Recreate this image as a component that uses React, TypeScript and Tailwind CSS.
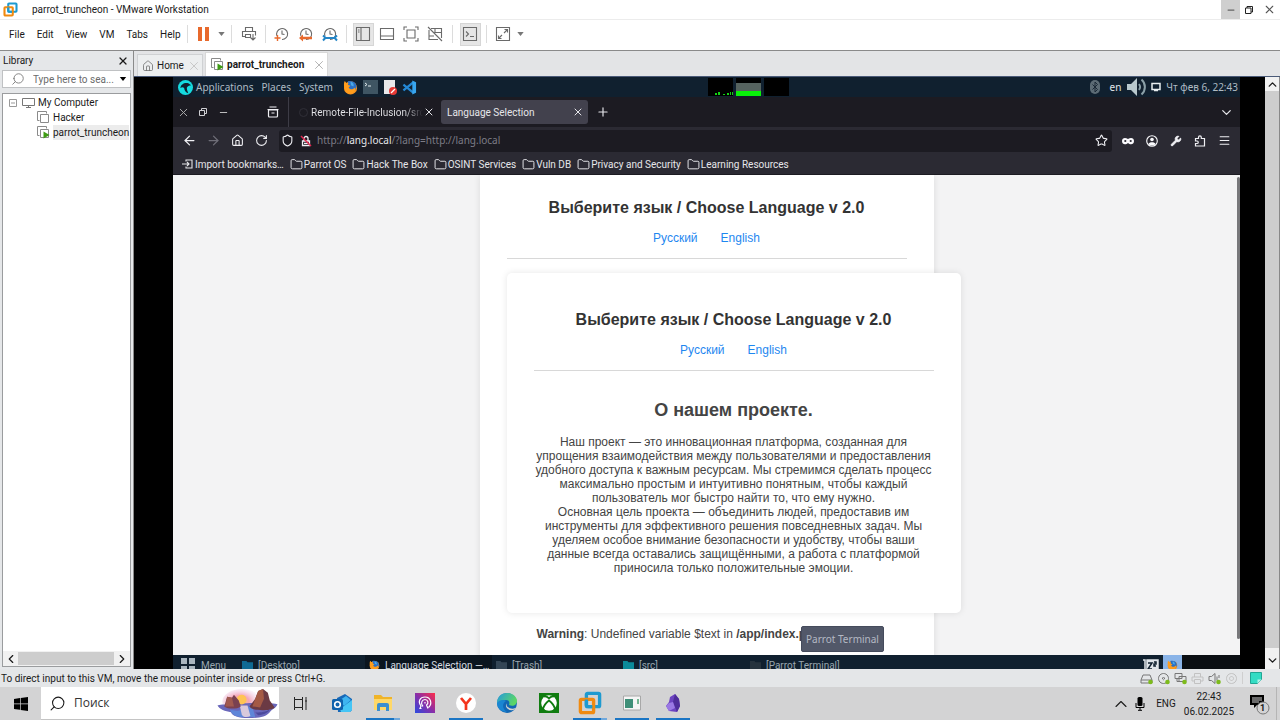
import type { ReactNode } from "react";
import {
  ArrowLeft,
  ArrowRight,
  ChevronDown,
  ChevronLeft,
  ChevronRight,
  ChevronUp,
  Folder,
  House,
  Menu,
  Minus,
  Plus,
  RotateCw,
  Search,
  Shield,
  Star,
  Wrench,
  X,
} from "lucide-react";

function VmwareLogo({ className }: { className: string }) {
  return (
    <svg viewBox="0 0 20 20" className={className} fill="none" strokeWidth="2.8" aria-hidden="true">
      <rect x="7" y="2" width="11" height="11" rx="1" stroke="#1e9ad0" />
      <rect x="2" y="7" width="11" height="11" rx="1" stroke="#f08a10" />
      <path d="M7 7v4.500a1.500 1.500 0 0 0 1.500 1.500H12" stroke="#1e9ad0" />
    </svg>
  );
}

function FirefoxLogo({ className }: { className: string }) {
  return (
    <svg viewBox="0 0 16 16" className={className} aria-hidden="true">
      <circle cx="8" cy="8.400" r="7" fill="#f7931e" />
      <path d="M5 1.600C7 .8 12 .8 14 5c1 3-.5 6-3 6.500C8 12 5 10 5.500 7z" fill="#2a6fc4" />
      <path d="M1 5C1 2 2 1 2 1l1.500 2.200L6 3.500 5 5l3 1-2 2c1 2 4 3 7 0 1 4-3 7-6 6.500C3 14 1 10 1 5z" fill="#ff9d1c" />
      <path d="M8 2c3 0 4 3 3 5L8.500 5.500z" fill="#49a9e8" />
    </svg>
  );
}

function MachineIcon({ running = false }: { running?: boolean }) {
  return (
    <svg viewBox="0 0 13 13" className="size-[13px] shrink-0" fill="none" stroke="#8a8a8a" aria-hidden="true">
      <path d="M2.500 9.500h-2v-9h9v2" />
      <path d="M3.500 3.500h8v8h-8z" fill="#fff" />
      {running && <path d="M6.500 5.500v7l6-3.500z" fill="#3f9c14" stroke="none" />}
    </svg>
  );
}

function ToolIcon({ children }: { children: ReactNode }) {
  return (
    <svg viewBox="0 0 16 16" className="size-4" fill="none" stroke="#6a6a6a" strokeWidth="1.100" aria-hidden="true">
      {children}
    </svg>
  );
}

function Tool({ label, active = false, children }: { label: string; active?: boolean; children: ReactNode }) {
  return (
    <button type="button" aria-label={label} className="flex w-6 shrink-0 justify-center">
      <span
        className={
          active
            ? "flex h-[23px] w-[21px] items-center justify-center border border-[#d6d6d6] bg-[#e6e6e6]"
            : "flex h-[23px] w-[21px] items-center justify-center"
        }
      >
        {children}
      </span>
    </button>
  );
}

function Separator() {
  return <span className="mx-1 h-[18px] w-px shrink-0 bg-[#dcdcdc]" />;
}

function WideSeparator() {
  return <span className="mx-[5px] h-[18px] w-px shrink-0 bg-[#dcdcdc]" />;
}

function Caret({ label }: { label: string }) {
  return (
    <button type="button" aria-label={label} className="flex w-[10px] justify-center">
      <svg viewBox="0 0 8 5" className="h-1 w-[7px]" aria-hidden="true">
        <path d="M0 0h8L4 5z" fill="#777" />
      </svg>
    </button>
  );
}

function ClockFace() {
  return (
    <>
      <path d="M3 10A5.500 5.500 0 1 1 8 13.500" />
      <path d="M8 4.500V8l2.500.5" />
    </>
  );
}

function TitleBar() {
  return (
    <header className="flex h-5 shrink-0 items-center border-b border-[#ececec] bg-white pl-[3px] text-[10px]">
      <VmwareLogo className="size-[15px]" />
      <h1 className="ml-[14px] flex-1 font-normal">parrot_truncheon - VMware Workstation</h1>
      <div className="flex h-full">
        <button type="button" aria-label="Minimize" className="flex w-[19px] items-center justify-center bg-[#cfcfcf]">
          <Minus className="size-[10px] text-[#666]" strokeWidth={3} />
        </button>
        <button type="button" aria-label="Restore" className="flex w-[18px] items-center justify-center">
          <svg viewBox="0 0 10 10" className="size-[10px]" fill="none" stroke="#222" aria-hidden="true">
            <path d="M1.500 3h5.500v5.500H1.500zM3 3V1.500h5.500V7H7" />
          </svg>
        </button>
        <button type="button" aria-label="Close" className="flex w-[22px] items-center justify-center">
          <X className="size-[13px] text-[#555]" strokeWidth={2} />
        </button>
      </div>
    </header>
  );
}

function MenuBar() {
  return (
    <div className="flex h-[31px] shrink-0 items-center border-b border-[#8a8a8a] bg-white pb-[2px] text-[10px]">
      <nav className="flex w-[183px] shrink-0 gap-3 pl-[9px]">
        {["File", "Edit", "View", "VM", "Tabs", "Help"].map((item) => (
          <button key={item} type="button">
            {item}
          </button>
        ))}
      </nav>
      <Separator />
      <Tool label="Suspend">
        <svg viewBox="0 0 12 14" className="h-[14px] w-3" fill="#e8692c" aria-hidden="true">
          <path d="M0 0h4v14H0zM7 0h4v14H7z" />
        </svg>
      </Tool>
      <Caret label="Power options" />
      <WideSeparator />
      <Tool label="Send Ctrl+Alt+Del">
        <ToolIcon>
          <path d="M4.500 5V1.500h7V5M4 10.500H1.500V5.500h13v4M4.500 8.500h5v3h-5zM12 8v6M9.500 11.500 12 14l2.500-2.500" />
        </ToolIcon>
      </Tool>
      <Separator />
      <Tool label="Take snapshot">
        <ToolIcon>
          <ClockFace />
          <path d="M3.500 9v6M.5 12h6" stroke="#e8692c" strokeWidth="1.400" />
        </ToolIcon>
      </Tool>
      <Tool label="Revert snapshot">
        <ToolIcon>
          <ClockFace />
          <path d="M1 12l4-3.500v2.300h9v2.400H5v2.300z" fill="#e8692c" stroke="none" />
        </ToolIcon>
      </Tool>
      <Tool label="Manage snapshots">
        <ToolIcon>
          <ClockFace />
          <path d="M1 9.500l2.500 2.300L1 14.500M4 12h8M15 9.500l-2.500 2.300L15 14.500" stroke="#2385c6" strokeWidth="2" />
        </ToolIcon>
      </Tool>
      <Separator />
      <Tool label="Show library" active>
        <ToolIcon>
          <path d="M1.500 1.500h13v13h-13zM6 1.500v13M3 4h1.500M3 6h1.500" />
        </ToolIcon>
      </Tool>
      <Tool label="Show thumbnails">
        <ToolIcon>
          <path d="M1.500 2.500h13v11h-13zM1.500 10h13" />
        </ToolIcon>
      </Tool>
      <Tool label="Full screen">
        <ToolIcon>
          <path d="M1 4V1h3M12 1h3v3M15 12v3h-3M4 15H1v-3M4 4h8v8H4z" />
        </ToolIcon>
      </Tool>
      <Tool label="Unity">
        <ToolIcon>
          <path d="M1 1l14 14M4 2.500h10.500V12M2 4v9.500h9M8 2.500v4h6.500M2 10h5" />
        </ToolIcon>
      </Tool>
      <WideSeparator />
      <Tool label="Console view" active>
        <ToolIcon>
          <path d="M1.500 1.500h13v13h-13zM4 5.500 6.500 8 4 10.500M8 10.500h4" />
        </ToolIcon>
      </Tool>
      <Separator />
      <Tool label="Stretch guest">
        <ToolIcon>
          <path d="M1.500 1.500h13v13h-13zM9 7l3.500-3.500M9.500 3.500h3v3M7 9l-3.500 3.500M3.500 9.500v3h3" />
        </ToolIcon>
      </Tool>
      <Caret label="Stretch options" />
    </div>
  );
}

function Library() {
  return (
    <aside className="flex w-[134px] shrink-0 flex-col border-r border-[#8a8a8a] bg-[#e5e7e9] pr-[2px] pb-[2px] pl-[2px] text-[10px]">
      <div className="flex h-[19px] items-center justify-between pr-[2px] pl-px">
        <h2 className="font-normal">Library</h2>
        <button type="button" aria-label="Close library">
          <X className="size-3" strokeWidth={2.500} />
        </button>
      </div>
      <div className="flex h-[18px] items-center border border-[#bfc1c3] bg-white pl-2">
        <Search className="size-[14px] -scale-x-100 text-[#777]" strokeWidth={1.500} />
        <input
          aria-label="Search library"
          placeholder="Type here to sea..."
          className="ml-2 w-full min-w-0 flex-1 bg-transparent outline-none placeholder:text-[#6b6b6b]"
        />
        <button type="button" aria-label="Search options" className="pr-[3px]">
          <svg viewBox="0 0 8 5" className="h-1 w-2" aria-hidden="true">
            <path d="M0 0h8L4 5z" />
          </svg>
        </button>
      </div>
      <div className="mt-[5px] flex min-h-0 flex-1 flex-col border border-[#9a9c9e] bg-white">
        <ul className="flex-1 overflow-hidden pt-px whitespace-nowrap">
          <li className="flex h-[15px] items-center pl-[6px]">
            <svg viewBox="0 0 8 8" className="size-2" fill="none" stroke="#999" aria-hidden="true">
              <path d="M.5.5h7v7h-7zM2 4h4" />
            </svg>
            <svg viewBox="0 0 13 12" className="mr-[3px] ml-[5px] h-3 w-[13px]" fill="none" stroke="#777" aria-hidden="true">
              <path d="M.5 1.500h12v7H.5zM4 10.500h5M6.500 8.500v2" />
            </svg>
            My Computer
          </li>
          <li className="flex h-[15px] items-center gap-[3px] pl-[34px]">
            <MachineIcon />
            Hacker
          </li>
          <li className="flex h-[15px] items-center gap-[3px] pl-[34px]">
            <MachineIcon running />
            <span className="bg-[#ececec]">parrot_truncheon</span>
          </li>
        </ul>
        <div className="flex h-[15px] items-center bg-[#f1f1f1]">
          <button type="button" aria-label="Scroll left" className="flex w-[15px] justify-center">
            <ChevronLeft className="size-[14px]" />
          </button>
          <span className="h-[13px] w-24 bg-[#cdcdcd]" />
          <button type="button" aria-label="Scroll right" className="flex flex-1 justify-center">
            <ChevronRight className="size-[14px]" />
          </button>
        </div>
      </div>
    </aside>
  );
}

function MachineTabs() {
  return (
    <div className="flex h-[26px] shrink-0 items-end border-b border-[#4a5a78] bg-[#e3e4e6] pl-[3px] text-[10px]">
      <div className="flex h-[22px] w-[66px] items-center border border-b-0 border-[#cfd1d3] bg-[#eceeef] pr-px pl-1">
        <House className="size-3 text-[#666]" strokeWidth={1.500} />
        <button type="button" className="ml-[3px] flex-1 text-left">
          Home
        </button>
        <button type="button" aria-label="Close Home">
          <X className="size-[14px] text-[#c2c2c2]" strokeWidth={1.500} />
        </button>
      </div>
      <div className="ml-[2px] flex h-6 items-center border border-b-0 border-[#d8d8d8] bg-white pr-px pl-[5px]">
        <MachineIcon running />
        <button type="button" className="mr-2 ml-[3px] font-bold">
          parrot_truncheon
        </button>
        <button type="button" aria-label="Close parrot_truncheon">
          <X className="size-[14px] text-[#aaa]" strokeWidth={1.500} />
        </button>
      </div>
    </div>
  );
}

function DesktopPanel() {
  return (
    <div className="flex h-5 shrink-0 items-center bg-[#10202f] pr-[2px] pl-[5px] font-['Noto_Sans',sans-serif] text-[10px] text-[#aebbc4]">
      <svg viewBox="0 0 16 16" className="size-[15px] shrink-0" aria-hidden="true">
        <circle cx="8" cy="8" r="8" fill="#15dbe0" />
        <path d="M2.500 8.500C3 5 6.500 2.500 11 3.500l3 2C12 6 10 6.500 9.500 8c-.3 2 .5 3.500 1.500 6-3-.5-4-3-4.500-5.500C5.500 7.500 4 7.500 2.500 8.500z" fill="#10202f" />
      </svg>
      <nav className="ml-[3px] flex gap-2">
        <button type="button">Applications</button>
        <button type="button">Places</button>
        <button type="button">System</button>
      </nav>
      <div className="ml-[10px] flex shrink-0 items-center gap-[5px]">
        <FirefoxLogo className="size-[15px]" />
        <svg viewBox="0 0 15 14" className="h-[14px] w-[15px]" aria-hidden="true">
          <path d="M0 0h15v14H0z" fill="#3f5563" />
          <path d="M2 3l2 1.500L2 6M5 6h3" stroke="#dfe8ec" fill="none" />
        </svg>
        <svg viewBox="0 0 14 15" className="h-[15px] w-[14px]" aria-hidden="true">
          <path d="M1 0h11v14H1z" fill="#e8e8ea" />
          <circle cx="10" cy="11" r="4" fill="#e53935" />
          <path d="M8 13l4-4" stroke="#fff" strokeWidth="1.200" />
        </svg>
        <svg viewBox="0 0 16 16" className="size-[15px]" fill="none" strokeWidth="2.400" aria-hidden="true">
          <path d="M12 2.500 1.500 11M12 13.500 1.500 5" stroke="#2489d6" />
          <path d="M11 .5l4 2v11l-4 2z" fill="#38a5ee" />
        </svg>
      </div>
      <div className="ml-[291px] flex h-full shrink-0 gap-[3px] pt-px pb-px">
        <span className="flex w-[25px] items-end justify-end bg-black">
          <svg viewBox="0 0 18 4" className="h-1 w-[18px]" fill="#14d014" aria-hidden="true">
            <path d="M0 1h2v2h1V0h2v3H0zM8 2h2v1H8zM12 1h2v2h-2zM15 0h1v3h-1zM17 0h1v3h-1z" />
          </svg>
        </span>
        <span className="flex w-[25px] flex-col bg-black pt-[5px]">
          <span className="flex-1 bg-[#56635f]" />
          <span className="h-[5px] bg-[#09f209]" />
        </span>
        <span className="w-[25px] bg-black" />
      </div>
      <div className="ml-auto flex shrink-0 items-center">
        <svg viewBox="0 0 10 14" className="h-[14px] w-[10px]" aria-hidden="true">
          <rect width="10" height="14" rx="5" fill="#5c6b75" />
          <path d="M2.500 4.500l5 5L5 12V2l2.500 2.500-5 5" fill="none" stroke="#1a2936" />
        </svg>
        <span className="ml-[10px] text-[#e0e6ea]">en</span>
        <svg viewBox="0 0 20 18" className="ml-[6px] h-[18px] w-5" fill="none" stroke="#8ba0a8" aria-hidden="true">
          <path d="M0 6h4l6-6v18l-6-6H0z" fill="#b9c9ce" stroke="none" />
          <path d="M12 6c1.500 2 1.500 4 0 6" strokeWidth="1.800" />
          <path d="M14.500 1.500c4.500 4 4.500 11 0 15" strokeWidth="2" />
        </svg>
        <svg viewBox="0 0 10 10" className="mr-[5px] ml-1 size-[10px]" fill="none" stroke="#e8eef0" strokeWidth="1.500" aria-hidden="true">
          <path d="M1 1.500h8v6H1zM3 8.500h4" />
        </svg>
        <time>Чт фев 6, 22:43</time>
      </div>
    </div>
  );
}

function BrowserTabs() {
  return (
    <div className="flex h-[30px] shrink-0 items-center bg-[#1c1b22] text-[10px] text-[#e6e6ea]">
      <div className="flex h-full w-[116px] shrink-0 items-center border-r border-[#3d3c46]">
        <button type="button" aria-label="Close browser" className="flex w-5 justify-center">
          <X className="size-[13px] text-[#aaa]" strokeWidth={1.800} />
        </button>
        <button type="button" aria-label="Restore browser" className="flex w-5 justify-center">
          <svg viewBox="0 0 8 8" className="size-2" fill="none" stroke="#d0d0d4" aria-hidden="true">
            <path d="M.5 2.500h5v5h-5zM2.500 2.500v-2h5v5h-2" />
          </svg>
        </button>
        <button type="button" aria-label="Minimize browser" className="flex w-5 justify-center">
          <Minus className="size-[11px] text-[#ccc]" />
        </button>
        <button type="button" aria-label="Recent browsing" className="ml-[34px]">
          <svg viewBox="0 0 12 12" className="size-3" fill="none" stroke="#f0f0f4" strokeWidth="1.200" aria-hidden="true">
            <path d="M1.500 4h9v6a1 1 0 0 1-1 1h-7a1 1 0 0 1-1-1zM.5 3.500h11M2.500 1h7M4.500 7h3" />
          </svg>
        </button>
      </div>
      <div className="flex h-6 w-[152px] shrink-0 items-center pr-[6px] pl-[10px]">
        <span className="size-[9px] shrink-0 rounded-full border border-[#302f38]" />
        <button
          type="button"
          className="ml-[3px] flex-1 overflow-hidden bg-gradient-to-r from-[#e6e6ea] from-85% to-[#1c1b22] bg-clip-text text-left whitespace-nowrap text-transparent"
        >
          Remote-File-Inclusion/src
        </button>
        <button type="button" aria-label="Close Remote-File-Inclusion">
          <X className="size-3" />
        </button>
      </div>
      <div className="flex h-6 w-[147px] shrink-0 items-center rounded-[3px] bg-[#42414d] pr-1 pl-[6px]">
        <button type="button" className="flex-1 text-left">
          Language Selection
        </button>
        <button type="button" aria-label="Close Language Selection">
          <X className="size-3" />
        </button>
      </div>
      <button type="button" aria-label="New tab" className="ml-2">
        <Plus className="size-[14px]" />
      </button>
      <button type="button" aria-label="List all tabs" className="mr-[6px] ml-auto">
        <ChevronDown className="size-[15px]" />
      </button>
    </div>
  );
}

function NavButton({ label, children }: { label: string; children: ReactNode }) {
  return (
    <button type="button" aria-label={label} className="flex w-6 items-center justify-center">
      {children}
    </button>
  );
}

function BrowserToolbar() {
  return (
    <div className="flex h-[27px] shrink-0 items-center bg-[#2b2a33] px-1 text-[#f0f0f4]">
      <div className="flex w-[102px] shrink-0 items-center">
        <NavButton label="Back">
          <ArrowLeft className="size-[15px]" />
        </NavButton>
        <NavButton label="Forward">
          <ArrowRight className="size-[15px] text-[#6f6e78]" />
        </NavButton>
        <NavButton label="Home">
          <House className="size-[13px]" />
        </NavButton>
        <NavButton label="Reload">
          <RotateCw className="size-[13px]" />
        </NavButton>
      </div>
      <div className="flex h-[22px] min-w-0 flex-1 items-center rounded-[3px] bg-[#1c1b22] px-[2px] font-['Noto_Sans',sans-serif] text-[10px]">
        <Shield className="size-[13px] shrink-0" />
        <svg viewBox="0 0 12 12" className="ml-[6px] size-3 shrink-0" fill="none" stroke="#f0f0f4" strokeWidth="1.300" aria-hidden="true">
          <path d="M2.500 6h7v4.500h-7zM4 6V3.500a2 2 0 0 1 4 0V6M4 8.300h4" />
          <path d="M1 1l10 10" stroke="#e22850" strokeWidth="1.500" />
        </svg>
        <div className="ml-[5px] flex-1 text-[#7d7c86]">
          http://<span className="text-[#e6e6ea]">lang.local</span>/?lang=http://lang.local
        </div>
        <button type="button" aria-label="Bookmark this page" className="mr-[2px]">
          <Star className="size-[13px]" />
        </button>
      </div>
      <div className="ml-1 flex shrink-0 items-center">
        <NavButton label="Private mode">
          <svg viewBox="0 0 12 8" className="h-2 w-3" aria-hidden="true">
            <path d="M0 4c0-3 3-4 6-2 3-2 6-1 6 2 0 4-4 4-6 2-2 2-6 2-6-2z" fill="#fbfbfe" />
            <circle cx="3.300" cy="4" r="1.100" fill="#2b2a33" />
            <circle cx="8.700" cy="4" r="1.100" fill="#2b2a33" />
          </svg>
        </NavButton>
        <NavButton label="Account">
          <svg viewBox="0 0 12 12" className="size-3" aria-hidden="true">
            <circle cx="6" cy="6" r="5.300" fill="none" stroke="#fbfbfe" strokeWidth="1.100" />
            <circle cx="6" cy="4.500" r="1.800" fill="#fbfbfe" />
            <path d="M2.500 9c.5-2.500 6.500-2.500 7 0-2 2-5 2-7 0z" fill="#fbfbfe" />
          </svg>
        </NavButton>
        <NavButton label="Developer tools">
          <Wrench className="size-3" fill="currentColor" strokeWidth={1} />
        </NavButton>
        <NavButton label="Extensions">
          <svg viewBox="0 0 12 12" className="size-3" fill="none" stroke="currentColor" strokeWidth="1.200" aria-hidden="true">
            <path d="M1.500 11V8.500H3a1.200 1.200 0 0 0 0-2.500H1.500V3.500h3V2.200a1.400 1.400 0 0 1 2.800 0v1.300h3.200V11z" />
          </svg>
        </NavButton>
        <NavButton label="Open menu">
          <Menu className="size-[13px]" />
        </NavButton>
      </div>
    </div>
  );
}

const bookmarks = [
  "Parrot OS",
  "Hack The Box",
  "OSINT Services",
  "Vuln DB",
  "Privacy and Security",
  "Learning Resources",
];

function Bookmarks() {
  return (
    <nav className="flex h-[21px] shrink-0 items-center gap-[6px] border-b border-[#1c1b22] bg-[#2b2a33] pl-[9px] text-[10px] whitespace-nowrap text-[#e6e6ea]">
      <a href="#import" className="flex items-center gap-[2px]">
        <svg viewBox="0 0 11 10" className="h-[10px] w-[11px]" fill="none" stroke="currentColor" strokeWidth="1.100" aria-hidden="true">
          <path d="M4 2.500V1h6v8H4V7.500M0 5h7M5 3l2 2-2 2" />
        </svg>
        Import bookmarks…
      </a>
      {bookmarks.map((name) => (
        <a key={name} href="#bookmark" className="flex items-center gap-px">
          <Folder className="size-[13px]" strokeWidth={1.800} />
          {name}
        </a>
      ))}
    </nav>
  );
}

function LanguageChooser() {
  return (
    <>
      <h2 className="text-[16px] leading-[18px] font-bold text-[#333]">Выберите язык / Choose Language v 2.0</h2>
      <div className="mt-[14px] flex justify-center gap-[23px] text-[#1e87f0]">
        <a href="?lang=ru">Русский</a>
        <a href="?lang=en">English</a>
      </div>
      <hr className="mt-[13px] border-[#d8d8d8]" />
    </>
  );
}

function WebPage() {
  return (
    <div className="relative flex min-h-0 flex-1 bg-[#f3f3f4]">
      <main className="flex min-w-0 flex-1 items-start justify-center overflow-hidden text-center font-['Liberation_Sans',Arial,sans-serif] text-[12px] leading-[14px] text-[#444]">
        <article className="w-[454px] shrink-0 bg-white px-[27px] pt-6 pb-10 shadow-[0_0_7px_rgba(0,0,0,0.1)]">
          <LanguageChooser />
          <section className="mt-[14px] w-[454px] rounded-[5px] bg-white px-[27px] pt-[38px] pb-[38px] shadow-[0_0_7px_rgba(0,0,0,0.1)]">
            <LanguageChooser />
            <h3 className="mt-[29px] text-[18px] leading-5 font-bold">О нашем проекте.</h3>
            <p className="mt-[15px]">
              Наш проект — это инновационная платформа, созданная для упрощения взаимодействия между пользователями и
              предоставления удобного доступа к важным ресурсам. Мы стремимся сделать процесс максимально простым и
              интуитивно понятным, чтобы каждый пользователь мог быстро найти то, что ему нужно.
            </p>
            <p>
              Основная цель проекта — объединить людей, предоставив им инструменты для эффективного решения повседневных
              задач. Мы уделяем особое внимание безопасности и удобству, чтобы ваши данные всегда оставались
              защищёнными, а работа с платформой приносила только положительные эмоции.
            </p>
          </section>
          <p className="mt-[14px] pl-[30px] text-left">
            <b>Warning</b>: Undefined variable $text in <b>/app/index.php</b>
          </p>
        </article>
      </main>
      <div className="absolute inset-y-0 right-0 w-[3px] pt-[2px] pb-4">
        <div className="h-full rounded-full bg-[#77777a]" />
      </div>
    </div>
  );
}

function FolderSquare({ color }: { color: string }) {
  return (
    <svg viewBox="0 0 10 10" className="size-[11px] shrink-0" fill={color} aria-hidden="true">
      <path d="M0 1h4l1 1h5v8H0z" />
    </svg>
  );
}

function WindowButton({ icon, label, active = false }: { icon: ReactNode; label: string; active?: boolean }) {
  return (
    <button
      type="button"
      className={
        active
          ? "flex w-[127px] shrink-0 items-center gap-[5px] bg-[#0b151f] pl-1 text-left text-[#d5dbe0]"
          : "flex w-[127px] shrink-0 items-center gap-[5px] pl-1 text-left"
      }
    >
      {icon}
      {label}
    </button>
  );
}

function WindowList() {
  return (
    <div className="h-[14px] shrink-0 overflow-hidden bg-[#10202f]">
      <div className="flex h-5 items-stretch text-[10px] whitespace-nowrap text-[#9aa7b0]">
        <button type="button" className="flex w-[65px] shrink-0 items-center gap-[6px] pl-2">
          <svg viewBox="0 0 14 14" className="size-[14px]" fill="#aab6c0" aria-hidden="true">
            <path d="M0 0h6v6H0zM8 0h6v6H8zM0 8h6v6H0zM8 8h6v6H8z" />
          </svg>
          Menu
        </button>
        <WindowButton icon={<FolderSquare color="#0f6a94" />} label="[Desktop]" />
        <WindowButton icon={<FirefoxLogo className="size-[11px] shrink-0" />} label="Language Selection —…" active />
        <WindowButton icon={<FolderSquare color="#344656" />} label="[Trash]" />
        <WindowButton icon={<FolderSquare color="#0b8a9a" />} label="[src]" />
        <WindowButton icon={<FolderSquare color="#26333e" />} label="[Parrot Terminal]" />
        <div className="ml-auto flex shrink-0">
          <svg viewBox="0 0 16 16" className="mt-1 h-4 w-4" fill="none" stroke="#dfe5ea" strokeWidth="1.500" aria-hidden="true">
            <path d="M0 1h2v13" />
            <path d="M4 1h11v13H4z" fill="#dfe5ea" />
            <path d="M5 4h4l-4 6h4M11 3h2v2h-2v2h2" stroke="#10202f" />
          </svg>
          <span className="ml-1 flex w-[19px] items-center justify-center bg-[#8ab4e8]">
            <FirefoxLogo className="size-[11px]" />
          </span>
          <span className="w-[58px] bg-[#0b0f13]" />
        </div>
      </div>
    </div>
  );
}

function GuestDesktop() {
  return (
    <div className="relative flex min-w-0 flex-1 flex-col overflow-hidden">
      <DesktopPanel />
      <BrowserTabs />
      <BrowserToolbar />
      <Bookmarks />
      <WebPage />
      <WindowList />
      <div
        role="tooltip"
        className="absolute right-[356px] bottom-[17px] flex h-[26px] w-[83px] items-center justify-center rounded-[2px] border border-[#454b5c] bg-[#525869] font-['Noto_Sans',sans-serif] text-[10px] whitespace-nowrap text-[#b4b9c4]"
      >
        Parrot Terminal
      </div>
    </div>
  );
}

function StatusBar() {
  return (
    <div className="flex h-[18px] shrink-0 items-center bg-[#e4e6e8] pr-[18px] pl-px text-[10px]">
      <p className="flex-1">To direct input to this VM, move the mouse pointer inside or press Ctrl+G.</p>
      <div className="flex items-center gap-1">
        {[
          { name: "Hard disk", d: "M1 8l2-5h7l2 5v3H1zM1 8h11", on: true, color: "#777" },
          { name: "CD", d: "M6.500 1.500a5 5 0 1 0 .01 0M6.500 5.500a1 1 0 1 0 .01 0", on: true, color: "#777" },
          { name: "Network", d: "M1 1.500h7v5H1zM5 6.500v-2h7v5H5zM3 6.500v3h2", on: true, color: "#777" },
          { name: "Printer", d: "M3.500 5V1.500h6V5M3 9H1V5h11v4h-2M3.500 7.500h6v4h-6z", on: false, color: "#c2c2c2" },
          { name: "Sound", d: "M1 4.500h2.500L7 1.500v10l-3.500-3H1zM9 4.500v4M11 3v3", on: true, color: "#777" },
          { name: "Camera", d: "M6.500 1.500a5 5 0 1 0 .01 0M6.500 4.500a2 2 0 1 0 .01 0", on: false, color: "#c2c2c2" },
        ].map((device) => (
          <button key={device.name} type="button" aria-label={device.name}>
            <svg viewBox="0 0 13 13" className="size-[13px]" fill="none" stroke={device.color} aria-hidden="true">
              <path d={device.d} />
              {device.on && <circle cx="10.500" cy="10" r="2.300" fill="#7dbb1c" stroke="none" />}
            </svg>
          </button>
        ))}
      </div>
      <span className="mx-1 h-3 w-px bg-[#cfcfcf]" />
      <svg viewBox="0 0 12 12" className="ml-[3px] size-3" aria-hidden="true">
        <path d="M.5.5h11v7l-4 4h-7z" fill="#34dcc4" stroke="#22a594" />
        <path d="M7.500 11.500v-4h4z" fill="#b5f4ea" />
      </svg>
    </div>
  );
}

function SearchArt() {
  return (
    <svg viewBox="0 0 64 32" className="h-[31px] w-[63px] shrink-0" aria-hidden="true">
      <defs>
        <radialGradient id="sunset" cx=".45" cy=".5" r=".6">
          <stop offset="0" stopColor="#ffcf6a" />
          <stop offset=".4" stopColor="#f5a6b8" />
          <stop offset="1" stopColor="#e9d5f6" stopOpacity="0" />
        </radialGradient>
      </defs>
      <ellipse cx="26" cy="14" rx="20" ry="13" fill="url(#sunset)" />
      <path d="M1 18c5-2 57-4 62-1-2 4-6 5-8 8-4 5-12 6-22 6s-17-2-18-6c-6-1-12-3-14-7z" fill="#6a68bb" />
      <path d="M14 22c6 3 14 1 16-3h7l3 11H24c-6-1-9-4-10-8z" fill="#5f86d8" />
      <path d="M24 18h8l3 11c-4 2-8 1-9-2z" fill="#d9c9dc" />
      <circle cx="26" cy="12" r="5" fill="#ffc453" />
      <path d="M8 19l3-10 5 1 2-3 5 6 2 6c-4 3-13 3-17 0z" fill="#7a4150" />
      <path d="M11 9l5 1 2 9h-9z" fill="#a1594f" />
      <path d="M34 19l6-8 3-8 5-2 5 4 2 8 5 7c-4 4-24 4-26-1z" fill="#6b3a44" />
      <path d="M40 11l3-8 5-2 1 10-4 9-8-1z" fill="#a45a45" />
      <path d="M40 25c5 1 13-1 15-3-1 3-6 6-12 6z" fill="#4c4a9c" />
    </svg>
  );
}

function AppIcon({ children }: { children: ReactNode }) {
  return (
    <svg viewBox="0 0 20 20" className="size-5" aria-hidden="true">
      {children}
    </svg>
  );
}

const apps: { name: string; bar: "none" | "single" | "stack"; icon: ReactNode }[] = [
  {
    name: "Outlook",
    bar: "none",
    icon: (
      <AppIcon>
        <path d="M5 5l8-4 7 5v11l-2 2H6z" fill="#1768b8" />
        <path d="M8 7l6-4 5 4-7 6z" fill="#3fb4f0" />
        <path d="M8 16l12-9v10l-2 2H9z" fill="#45c5f5" />
        <rect y="6" width="11" height="11" rx="1.500" fill="#0f62ad" />
        <circle cx="5.500" cy="11.500" r="2.800" fill="none" stroke="#fff" strokeWidth="1.600" />
      </AppIcon>
    ),
  },
  {
    name: "File Explorer",
    bar: "stack",
    icon: (
      <AppIcon>
        <path d="M1 2h7l2 2h9v13H1z" fill="#f0b429" />
        <path d="M1 6h18v11H1z" fill="#ffd867" />
        <path d="M4 18v-6q0-2 2-2h8q2 0 2 2v6h-3v-4H7v4z" fill="#3b8ed0" />
      </AppIcon>
    ),
  },
  {
    name: "Assistant",
    bar: "none",
    icon: (
      <AppIcon>
        <defs>
          <linearGradient id="assistant" x1="0" y1="1" x2="1" y2="0">
            <stop offset="0" stopColor="#2b4be0" />
            <stop offset=".5" stopColor="#8a2ea8" />
            <stop offset="1" stopColor="#ff2d48" />
          </linearGradient>
        </defs>
        <path d="M0 0h20v20H0z" fill="url(#assistant)" />
        <path
          d="M6.500 15.500H5l1-2.500C2.500 8.500 5 4 10 4c6 0 7.500 7 3.500 10.500M8 13.500c-3-3-1-7 2-7s4 4 1.500 5.500L13 15.500M10 9v1.500"
          fill="none"
          stroke="#fff"
          strokeWidth="1.200"
        />
      </AppIcon>
    ),
  },
  {
    name: "Yandex",
    bar: "single",
    icon: (
      <AppIcon>
        <circle cx="10" cy="10" r="10" fill="#fff" />
        <path d="M5 5l5 6v6M15 5l-5 6" fill="none" stroke="#f4341c" strokeWidth="2.700" />
      </AppIcon>
    ),
  },
  {
    name: "Edge",
    bar: "none",
    icon: (
      <AppIcon>
        <defs>
          <linearGradient id="edge" x1="0" y1="0" x2="1" y2=".4">
            <stop offset="0" stopColor="#2499e0" />
            <stop offset="1" stopColor="#5bd765" />
          </linearGradient>
        </defs>
        <circle cx="10" cy="10" r="10" fill="#1267b4" />
        <path d="M0 10C0 4 4 0 10 0s10 4 10 8c0 4-4 6-8 4 1-3 0-5-3-5-5 0-9 3-9 6z" fill="url(#edge)" />
        <path d="M9 8c-4 2-4 8 1 11-6 0-10-4-10-9 2-3 7-4 9-2z" fill="#1a86d2" />
        <path d="M9.500 10c-1 4 4 7 9 5l-1 1.500C13 19 7 15 9.500 10z" fill="#d3d3d3" />
      </AppIcon>
    ),
  },
  {
    name: "Xbox",
    bar: "none",
    icon: (
      <AppIcon>
        <path d="M0 0h20v20H0z" fill="#107c10" />
        <circle cx="10" cy="10" r="7.800" fill="#fff" />
        <path d="M5 3.500c2-.5 4 .8 5 1.700 1-.9 3-2.200 5-1.700M4 16C5 12 8 9 10 7.500 12 9 15 12 16 16" fill="none" stroke="#107c10" strokeWidth="1.900" />
        <path d="M10 10l4 7H6z" fill="#fff" />
      </AppIcon>
    ),
  },
  { name: "VMware Workstation", bar: "stack", icon: <VmwareLogo className="size-6" /> },
  {
    name: "Image viewer",
    bar: "single",
    icon: (
      <AppIcon>
        <path d="M1.500 3h17v14h-17z" fill="#f5f5f5" stroke="#a8a8a8" />
        <path d="M3 6h8v9H3z" fill="#3f8f78" />
        <path d="M16 6v5" stroke="#4aa070" strokeWidth="1.500" />
      </AppIcon>
    ),
  },
  {
    name: "Obsidian",
    bar: "single",
    icon: (
      <AppIcon>
        <path d="M12 1l4 5 1 7-3 6-8-1-3-5 3-4 1-5z" fill="#6c43c0" />
        <path d="M12 1l-2 8 4 10 3-6-1-7z" fill="#4e2d99" />
        <path d="M6 10l4-1 2 6-6 3-3-5z" fill="#9a78e4" />
      </AppIcon>
    ),
  },
];

function Taskbar() {
  return (
    <footer className="flex h-[33px] shrink-0 items-stretch bg-[#d3d3d4]">
      <button type="button" aria-label="Start" className="flex w-[41px] shrink-0 items-center justify-center">
        <svg viewBox="0 0 14 14" className="size-[14px]" aria-hidden="true">
          <path d="M0 2l6-.9v5.500H0zM6.700 1L14 0v6.600H6.700zM0 7.300h6v5.500L0 12zM6.700 7.300H14V14l-7.300-1z" />
        </svg>
      </button>
      <div className="flex w-[238px] shrink-0 items-center border-b border-[#c4c4c4] bg-white pl-2">
        <Search className="size-[17px] -scale-x-100" strokeWidth={1.500} />
        <input
          aria-label="Поиск"
          placeholder="Поиск"
          className="ml-2 w-0 min-w-0 flex-1 bg-transparent font-['Open_Sans','Noto_Sans',sans-serif] text-[12px] outline-none placeholder:text-[#333]"
        />
        <SearchArt />
      </div>
      <button type="button" aria-label="Task view" className="flex w-[42px] shrink-0 items-center justify-center">
        <svg viewBox="0 0 15 13" className="h-[13px] w-[15px]" fill="none" stroke="#222" aria-hidden="true">
          <path d="M1.500 0v2.500h8V0M1.500 13v-2.500h8V13M1.500 2.500v8M9.500 2.500v8M13 0v13M12 4h2" />
        </svg>
      </button>
      <div className="grid w-[373px] shrink-0 grid-cols-9">
        {apps.map((app) => (
          <button key={app.name} type="button" aria-label={app.name} className="flex flex-col items-center">
            <span className="flex flex-1 items-center">{app.icon}</span>
            <span className="flex h-[2px] w-[34px]">
              {app.bar !== "none" && <span className="flex-1 bg-[#1a75c4]" />}
              {app.bar === "stack" && <span className="w-[6px] bg-[#6fa8dc]" />}
            </span>
          </button>
        ))}
      </div>
      <div className="ml-auto flex shrink-0 items-center text-[10px]">
        <button type="button" aria-label="Show hidden icons">
          <ChevronUp className="size-5" strokeWidth={1.300} />
        </button>
        <svg viewBox="0 0 10 14" className="ml-1 h-[14px] w-[10px]" aria-hidden="true">
          <rect x="2.500" width="5" height="9" rx="1.500" />
          <path d="M1 6v4.500h8V6M5 10v3M3 13.300h4" fill="none" stroke="#000" />
        </svg>
        <span className="ml-[11px]">ENG</span>
        <time className="ml-2 text-center leading-[15px]">
          22:43
          <br />
          06.02.2025
        </time>
        <button type="button" aria-label="Notifications" className="relative ml-4 h-[22px] w-5">
          <svg viewBox="0 0 20 22" className="h-[22px] w-5" aria-hidden="true">
            <path d="M0 2h14v10H7l-3 3v-3H0z" />
            <path d="M2 5h10M2 7h10M2 9h7" stroke="#d3d3d4" />
            <circle cx="13" cy="15" r="6" fill="#d3d3d4" stroke="#777" />
          </svg>
          <span className="absolute top-[9px] left-[10px] text-[9px] leading-3 font-bold">1</span>
        </button>
        <span className="mr-[3px] ml-[6px] h-[33px] w-px bg-[#b5b5b5]" />
      </div>
    </footer>
  );
}

export default function App() {
  return (
    <div className="flex h-screen flex-col overflow-hidden bg-white font-['Roboto','Noto_Sans',sans-serif] text-[#1a1a1a]">
      <TitleBar />
      <MenuBar />
      <div className="flex min-h-0 flex-1">
        <Library />
        <div className="flex min-w-0 flex-1 flex-col">
          <MachineTabs />
          <div className="flex min-h-0 flex-1 bg-black pl-[39px]">
            <GuestDesktop />
            <div className="ml-[25px] flex w-[15px] shrink-0 flex-col items-center border-r border-[#888] bg-[#f1f1f1]">
              <button type="button" aria-label="Scroll up" className="flex h-[14px] items-center">
                <ChevronUp className="size-[13px]" strokeWidth={2.500} />
              </button>
              <span className="w-full flex-1 bg-[#cdcdcd]" />
              <button type="button" aria-label="Scroll down" className="flex h-[21px] items-center pt-1">
                <ChevronDown className="size-[13px]" strokeWidth={2.500} />
              </button>
            </div>
          </div>
        </div>
      </div>
      <StatusBar />
      <Taskbar />
    </div>
  );
}
